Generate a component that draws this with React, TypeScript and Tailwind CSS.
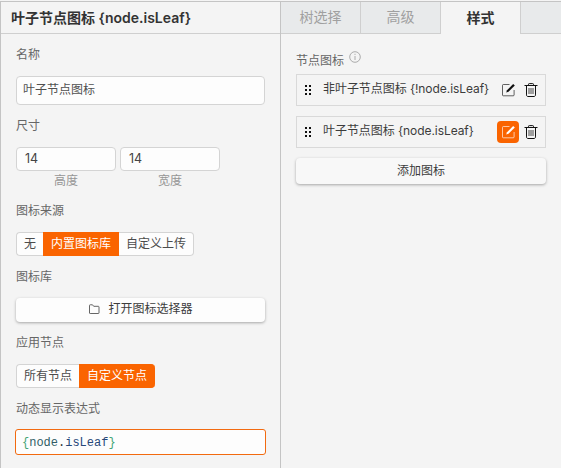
import type { ReactNode } from "react";

function Label({ children, className = "" }: { children: ReactNode; className?: string }) {
  return <div className={`h-5 text-xs leading-5 text-[#666] ${className}`}>{children}</div>;
}

function SizeField({ label }: { label: string }) {
  return (
    <div className="w-[100px]">
      <div className="h-6 rounded border border-[#d4d4d4] bg-[#fdfdfd] pl-2 text-[12.5px] leading-[22px] text-[#444]">
        14
      </div>
      <div className="h-5 text-center text-xs leading-[19px] text-[#969696]">{label}</div>
    </div>
  );
}

function EditIcon() {
  return (
    <svg className="ml-px" width="13" height="14" viewBox="0 0 13 14" fill="none">
      <path d="M7.500 1.500H1.500C.8 1.500.5 1.800.5 2.300v9.700c0 .5.300.800.8.800h9.900c.6 0 .9-.3.900-.8V7" stroke="currentColor" strokeWidth=".65" />
      <path d="M4.200 9.400 5 7.300 11.200 1.100l1.600 1.500L6.500 8.700Z" fill="currentColor" />
    </svg>
  );
}

function TrashIcon() {
  return (
    <svg width="14" height="14" viewBox="0 0 14 14" fill="none" stroke="currentColor">
      <path d="M.5 2.500h13M4.500 2.500V1.300c0-.5.300-.7.800-.7h3.400c.5 0 .8.200.8.700V2.500M2.500 2.700v9.200c0 .9.500 1.600 1.400 1.600h6.200c.9 0 1.400-.7 1.400-1.600V2.700" strokeWidth="1" />
      <path d="M5 5v6M7 5v6M9 5v6" strokeWidth=".75" />
    </svg>
  );
}

function DragIcon() {
  return (
    <svg width="7" height="10" viewBox="0 0 7 10" fill="#111">
      {[0, 4, 8].map((y) => (
        <g key={y}>
          <rect x="0" y={y} width="2" height="2" />
          <rect x="4" y={y} width="2" height="2" />
        </g>
      ))}
    </svg>
  );
}

function IconRow({ name, active = false, className = "" }: { name: string; active?: boolean; className?: string }) {
  return (
    <div className={`flex h-8 w-[250px] items-center border border-[#d9d9d9] pr-[7px] pl-2 text-[#111] ${className}`}>
      <div><DragIcon /></div>
      <div className="ml-[11px] grow text-xs leading-[18px] tracking-[-0.06px] whitespace-nowrap text-[#3c3c3c]">
        <div className="-mt-0.5">{name}</div>
      </div>
      <div className={`flex h-[22px] w-[22px] shrink-0 items-center justify-center rounded ${active ? "bg-[#fa6400] text-white" : ""}`}>
        <EditIcon />
      </div>
      <div className="ml-[5px] shrink-0"><TrashIcon /></div>
    </div>
  );
}

export default function App() {
  return (
    <div className="flex h-[468px] w-[561px] flex-col overflow-hidden bg-[#f4f4f4] pt-px font-['Inter','Noto_Sans_CJK_SC',sans-serif]">
      <div className="flex grow border-t border-l border-[#c4c4c4]">
        <section className="w-[279px] shrink-0">
          <h1 className="h-8 border-b border-[#cfcfcf] pl-2.5 text-sm leading-[32px] font-semibold text-[#333]">
            叶子节点图标 {"{node.isLeaf}"}
          </h1>
          <div className="pt-[11px] pl-[15px]">
            <Label>名称</Label>
            <div className="mt-[11px] h-[29px] w-[249px] rounded border border-[#d4d4d4] bg-[#fdfdfd] pl-1.5 text-xs leading-[26px] text-[#505050]">
              叶子节点图标
            </div>
            <Label className="mt-[11px]">尺寸</Label>
            <div className="mt-[11px] flex gap-1">
              <SizeField label="高度" />
              <SizeField label="宽度" />
            </div>
            <Label className="mt-[10px]">图标来源</Label>
            <div className="mt-[11px] flex h-6 text-xs leading-[22px] text-[#4c4c4c]">
              <div className="w-[27px] rounded-l border border-r-0 border-[#d4d4d4] bg-[#fdfdfd] pl-[7px]">无</div>
              <div className="w-[76px] border-y border-[#fa6400] bg-[#fa6400] text-center text-white">内置图标库</div>
              <div className="w-[75px] rounded-r border border-l-0 border-[#d4d4d4] bg-[#fdfdfd] text-center">自定义上传</div>
            </div>
            <Label className="mt-[11px]">图标库</Label>
            <div className="mt-[11px] flex h-6 w-[249px] items-center justify-center rounded bg-[#fdfdfd] text-xs leading-5 text-[#3c3c3c] shadow-[0_1px_3px_rgba(0,0,0,0.32)]">
              <svg className="mr-2 -mt-0.5" width="12" height="10" viewBox="0 0 12 10" fill="none">
                <path d="M1.500 9V1.500c0-.5.200-.7.700-.7h2.300l1.200 1.500h4.600c.5 0 .7.300.7.700v6c0 .4-.2.500-.7.500H2.200c-.5 0-.7-.1-.7-.5Z" stroke="#555" strokeWidth=".9" />
              </svg>
              <div className="-mt-0.5">打开图标选择器</div>
            </div>
            <Label className="mt-[11px]">应用节点</Label>
            <div className="mt-[11px] flex h-6 text-xs leading-[22px] text-[#4c4c4c]">
              <div className="w-[63px] rounded-l border border-r-0 border-[#d4d4d4] bg-[#fdfdfd] pl-[7px]">所有节点</div>
              <div className="w-[76px] rounded-r border-y border-[#fa6400] bg-[#fa6400] text-center text-white">自定义节点</div>
            </div>
            <Label className="mt-[11px]">动态显示表达式</Label>
            <div className="mt-[10px] -ml-px h-[26px] w-[251px] rounded-[3px] border border-[#f26a10] bg-[#fdfdfd] pl-1.5 font-['Liberation_Mono',monospace] text-xs leading-[26px] text-[#303030]">
              <span className="text-[#46a576]">{"{"}</span>
              <span className="text-[#315d66]">node</span>.<span className="text-[#274879]">isLeaf</span>
              <span className="text-[#46a576]">{"}"}</span>
            </div>
          </div>
        </section>
        <section className="w-[281px] shrink-0 border-l border-[#c4c4c4]">
          <nav className="flex h-8 text-[14px] leading-[30px] text-[#a0a0a0]">
            <div className="w-20 border-r border-b border-[#cfcfcf] bg-[#e8eaeb] text-center">树选择</div>
            <div className="w-20 border-r border-b border-[#cfcfcf] bg-[#e8eaeb] text-center">高级</div>
            <div className="w-[79px] text-center leading-[32px] font-semibold text-[#333]">样式</div>
            <div className="grow border-b border-l border-[#cfcfcf] bg-[#e8eaeb]" />
          </nav>
          <div className="pt-4 pl-[15px]">
            <div className="flex h-6">
              <Label className="mt-px">节点图标</Label>
              <svg className="mt-px ml-[5px]" width="12" height="12" viewBox="0 0 12 12" fill="none" stroke="#999" strokeWidth=".8">
                <circle cx="6" cy="6" r="5.300" />
                <path d="M6 5v4M6 2.800v1.100" />
              </svg>
            </div>
            <IconRow name="非叶子节点图标 {!node.isLeaf}" />
            <IconRow name="叶子节点图标 {node.isLeaf}" active className="mt-[10px]" />
            <div className="mt-[10px] h-[26px] w-[250px] rounded bg-[#f8f8f8] text-center text-xs leading-[25px] text-[#3c3c3c] shadow-[0_1px_3px_rgba(0,0,0,0.32)]">
              添加图标
            </div>
          </div>
        </section>
      </div>
    </div>
  );
}
